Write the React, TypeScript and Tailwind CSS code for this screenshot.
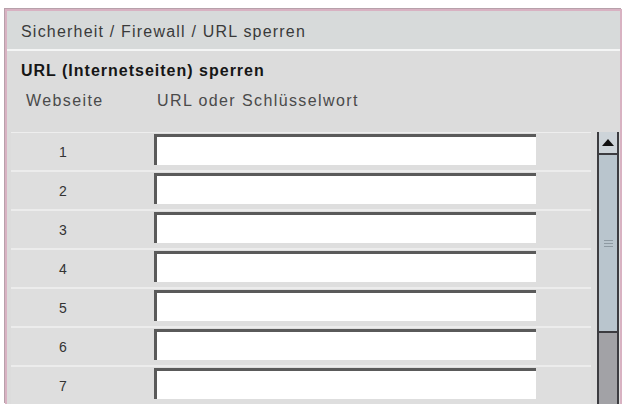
import React from 'react'

const rows = [1, 2, 3, 4, 5, 6, 7]

function ScrollBar() {
  return (
    <div className="flex w-[22px] shrink-0 flex-col border-x-2 border-[#3c3c40] bg-[#a2a2a6]">
      <div className="flex h-[23px] shrink-0 items-center justify-center border-b-2 border-[#3c3c40] bg-[#cdd4d9]">
        <svg width="12" height="7" viewBox="0 0 12 7">
          <path d="M6 0 L12 7 L0 7 Z" fill="#111" />
        </svg>
      </div>
      <div className="flex h-[178px] shrink-0 items-center justify-center border-b-2 border-[#3c3c40] bg-[#b9c5cd]">
        <div className="flex w-[9px] flex-col gap-[2px]">
          <div className="h-px bg-[#8e9aa2]" />
          <div className="h-px bg-[#8e9aa2]" />
          <div className="h-px bg-[#8e9aa2]" />
        </div>
      </div>
      <div className="flex-1" />
    </div>
  )
}

export default function App() {
  return (
    <div className="h-[404px] w-[626px] overflow-hidden bg-white font-['Liberation_Sans',Arial,sans-serif]">
      <div className="ml-[5px] mt-[9px] h-[395px] w-[617px] border-x-2 border-t-2 border-[#d8b2c2] shadow-[inset_1px_1px_0_#9c8a92,-1px_-1px_0_#b7a0aa]">
        <div className="flex h-[38px] items-center bg-[#d7dada] pl-[14px] pt-[3px] text-[16px] tracking-[1.2px] text-[#3a3a3a]">
          Sicherheit / Firewall / URL sperren
        </div>
        <div className="h-[2px] bg-[#f4f5f5]" />
        <div className="flex h-[353px] flex-col overflow-hidden bg-[#dcdcdc] pl-[4px] pr-[1px]">
          <div className="flex h-[36px] shrink-0 items-center pl-[10px] pt-[4px] text-[16px] font-bold tracking-[1px] text-[#161616]">
            URL (Internetseiten) sperren
          </div>
          <div className="flex h-[26px] shrink-0 items-center pt-[1px] text-[16px] tracking-[1.4px] text-[#4a4a4a]">
            <span className="w-[146px] pl-[15px]">Webseite</span>
            <span>URL oder Schlüsselwort</span>
          </div>
          <div className="mt-[19px] flex min-h-0 flex-1 gap-[6px]">
            <div className="flex flex-1 flex-col border-t border-[#eeeeee]">
              {rows.map((n) => (
                <div key={n} className="flex h-[39px] shrink-0 border-b-2 border-[#ececec] bg-[#dedede]">
                  <div className="w-[143px] shrink-0 pt-[2px]">
                    <div className="flex h-full w-[104px] items-center justify-center text-[14px] text-[#333]">
                      {n}
                    </div>
                  </div>
                  <div className="mt-[1px] h-[31px] w-[382px] border-l-[3px] border-t-[3px] border-[#5a5a5a] bg-white" />
                </div>
              ))}
            </div>
            <ScrollBar />
          </div>
        </div>
      </div>
    </div>
  )
}
